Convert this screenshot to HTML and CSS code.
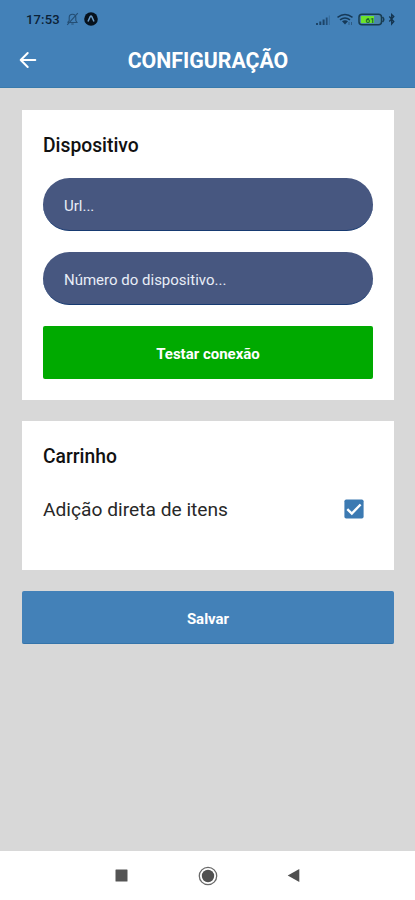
FILE: index.html
```
<!DOCTYPE html>
<html lang="pt-BR">
<head>
<meta charset="utf-8">
<title>Configuração</title>
<link rel="stylesheet" href="styles.css">
</head>
<body>
<header class="header">
  <div class="status">
    <span class="time">17:53</span>
    <svg class="bell" width="13" height="14" viewBox="0 0 13 14" fill="none" stroke="#244e74" stroke-width="1.1"><path d="M1.5 10.5h9.5L9.8 8.5V5.5C9.8 3.7 8.6 2.3 6.500 2.300S3.200 3.700 3.200 5.500v3L1.500 10.500M5.300 12h2.400M11.800 1.200 1.200 12.800"/></svg>
    <svg class="app" width="14" height="14" viewBox="0 0 14 14"><circle cx="7" cy="7" r="6.800" fill="#06121e"/><path d="M4 9.500 6.200 4.600Q7 3.400 7.800 4.600L10 9.500" fill="none" stroke="#6b9cc8" stroke-width="1.500"/></svg>
    <svg class="signals" width="82" height="16" viewBox="0 0 82 16">
      <g fill="#1c4468"><path d="M1 12h2v2H1zM4.300 10.500h2V14h-2zM7.600 8.500h2V14h-2z"/><path d="M10.800 6.500h1.800V14h-1.800z" opacity=".85"/><path d="M13.800 4.500h1V14h-1z" opacity=".35"/></g>
      <g fill="none" stroke="#163958" stroke-width="1.500"><path d="M22.500 6.300Q30 .8 37.500 6.300M25 8.800Q30 5.300 35 8.800"/></g>
      <path d="M27 10.300q3-2 6 0L30 13.500z" fill="#163958"/><path d="M34 11v3M36.500 11v3" stroke="#2c5a83"/>
      <rect x="44" y="3.200" width="22.500" height="10.500" rx="3" fill="#4b87ac" stroke="#183b50" stroke-width="1.500"/>
      <path d="M46 5h13v7H46z" fill="#6be52b"/><path d="M67.500 6q2.500 2.500 0 5" fill="none" stroke="#183b50" stroke-width="1.500"/>
      <text x="55" y="11.500" class="charge" text-anchor="middle">61</text>
      <path d="m74.300 5.500 4.500 5L76.700 13V3.500l2.100 2-4.500 5" fill="none" stroke="#14344f" stroke-width="1.300"/>
    </svg>
  </div>
  <div class="toolbar">
    <svg class="back" width="18" height="18" viewBox="0 0 18 18" fill="none" stroke="#fff" stroke-width="2" stroke-linecap="round" stroke-linejoin="round"><path d="M16.300 9H1.700M8.700 2 1.700 9l7 7"/></svg>
    <h1 class="title">CONFIGURAÇÃO</h1>
  </div>
</header>
<main class="content">
  <section class="card device">
    <h2 class="heading">Dispositivo</h2>
    <div class="field"><span>Url...</span></div>
    <div class="field"><span>Número do dispositivo...</span></div>
    <div class="button test">Testar conexão</div>
  </section>
  <section class="card cart">
    <h2 class="heading">Carrinho</h2>
    <div class="option"><span>Adição direta de itens</span>
      <svg width="20" height="20" viewBox="0 0 20 20"><rect x=".4" y=".4" width="19.200" height="19.200" rx="1.800" fill="#3c7ab2"/><path d="m3.300 10.200 4.500 4.300 8.800-9" fill="none" stroke="#fff" stroke-width="2.400"/></svg>
    </div>
  </section>
  <div class="button save">Salvar</div>
</main>
<nav class="nav">
  <svg width="13" height="13" viewBox="0 0 13 13"><rect x=".5" y=".5" width="12" height="12" rx=".5" fill="#545454"/></svg>
  <svg width="20" height="20" viewBox="0 0 20 20"><circle cx="10" cy="10" r="8.700" fill="none" stroke="#696969" stroke-width="1.300"/><circle cx="10" cy="10" r="6.200" fill="#505050"/></svg>
  <svg width="13" height="15" viewBox="0 0 13 15"><path d="M12.300 1v13L.7 7.500z" fill="#505050"/></svg>
</nav>
</body>
</html>
```
FILE: styles.css
```
* { box-sizing: border-box; }
body {
  margin: 0;
  height: 900px;
  display: flex;
  flex-direction: column;
  background: #d8d8d8;
  font-family: Roboto, "Liberation Sans", sans-serif;
  color: #111;
}
svg { display: block; flex: none; }
h1, h2 { margin: 0; }
.header { height: 88px; background: #4381b8; border-bottom: 1px solid #397bac; }
.status { display: flex; align-items: center; height: 38px; padding: 0 18px 0 26px; }
.time { width: 34px; font-size: 13px; font-weight: 500; letter-spacing: .15px; color: #0c2236; white-space: nowrap; }
.bell { margin-left: 6px; }
.app { margin-left: 5px; }
.signals { margin-left: auto; }
.charge { font: 700 8px Roboto, sans-serif; fill: #17622e; }
.toolbar { display: flex; align-items: center; height: 43px; padding-left: 19px; }
.title {
  flex: 1;
  margin-right: 36px;
  padding-top: 2px;
  text-align: center;
  font-size: 21.3px;
  font-weight: 700;
  line-height: 28px;
  color: #fff;
}
.content { flex: 1; display: flex; flex-direction: column; gap: 21px; padding: 22px 21px 0 22px; }
.card { padding: 22px 21px 21px; background: #fff; }
.device { height: 290px; display: flex; flex-direction: column; }
.cart { height: 149px; }
.heading { font-size: 19.3px; font-weight: 500; line-height: 28px; }
.field {
  display: flex;
  align-items: center;
  height: 53px;
  margin-top: 21px;
  padding: 3px 21px 0;
  border-radius: 27px;
  border-bottom: 1px solid #173a71;
  background: #475780;
  color: #e8edf7;
  font-size: 15px;
}
.heading + .field { margin-top: 18px; }
.button {
  display: flex;
  align-items: center;
  justify-content: center;
  height: 53px;
  flex: none;
  border-radius: 2px;
  padding-top: 2px;
  color: #fff;
  font-size: 15px;
  font-weight: 700;
}
.test { margin-top: 21px; background: #00aa00; }
.save { background: #4381b8; border-bottom: 1px solid #3474aa; padding-top: 3px; }
.option {
  display: flex;
  align-items: center;
  justify-content: space-between;
  height: 30px;
  margin-top: 23px;
  padding-right: 9px;
  font-size: 19.2px;
  color: #282828;
}
.nav {
  display: flex;
  justify-content: space-between;
  align-items: center;
  height: 49px;
  padding: 0 115px 0 115px;
  background: #fff;
}
```
